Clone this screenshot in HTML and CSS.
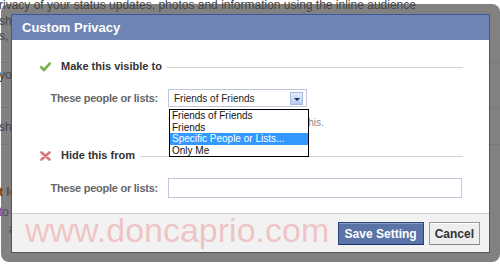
FILE: index.html
```html
<!DOCTYPE html>
<html lang="en">
<head>
    <meta charset="UTF-8">
    <title>Custom Privacy</title>
    <link rel="stylesheet" href="styles.css">
</head>
<body>
    <div class="page">
        <p class="lead">rivacy of your status updates, photos and information using the inline audience<br>share with everyone, friends of friends or friends only. This setting applies to<br>s, photos and posts you share from a phone.</p>
        <div class="page-row">you can choose who sees each item</div>
        <div class="page-row">sharing on Facebook</div>
        <div class="page-row page-row-title">t lets you share with</div>
        <div class="page-row page-link">to</div>
        <div class="page-row page-plain">a</div>
    </div>

    <div class="overlay">
        <div class="dialog">
            <div class="dialog-title">Custom Privacy</div>

            <div class="dialog-body">
                <div class="section-head">
                    <svg class="icon" width="11" height="10" viewBox="0 0 11 10">
                        <path d="M1.2 5.2 L4 8 L9.8 1.5" fill="none" stroke="#a9d38c" stroke-width="3.2" stroke-linecap="round" stroke-linejoin="round"/>
                        <path d="M1.2 5.2 L4 8 L9.8 1.5" fill="none" stroke="#6aa845" stroke-width="1.6" stroke-linecap="round" stroke-linejoin="round"/>
                    </svg>
                    <span class="section-label">Make this visible to</span>
                    <span class="rule"></span>
                </div>

                <div class="field">
                    <label class="field-label">These people or lists:</label>
                    <div class="control">
                        <div class="select">
                            <span>Friends of Friends</span>
                            <span class="select-btn"><span class="arrow"></span></span>
                        </div>
                        <div class="hint">Your friends of friends can see this.</div>
                        <ul class="dropdown">
                            <li>Friends of Friends</li>
                            <li>Friends</li>
                            <li class="active">Specific People or Lists...</li>
                            <li>Only Me</li>
                        </ul>
                    </div>
                </div>

                <div class="section-head section-hide">
                    <svg class="icon" width="11" height="10" viewBox="0 0 11 10">
                        <path d="M1.5 1.5 L9.5 8.5 M9.5 1.5 L1.5 8.5" fill="none" stroke="#eab1b1" stroke-width="3.4" stroke-linecap="round"/>
                        <path d="M1.5 1.5 L9.5 8.5 M9.5 1.5 L1.5 8.5" fill="none" stroke="#cf6565" stroke-width="1.6" stroke-linecap="round"/>
                    </svg>
                    <span class="section-label">Hide this from</span>
                    <span class="rule"></span>
                </div>

                <div class="field">
                    <label class="field-label field-label-tall">These people or lists:</label>
                    <div class="control">
                        <div class="text-input"></div>
                    </div>
                </div>
            </div>

            <div class="dialog-footer">
                <span class="watermark">www.doncaprio.com</span>
                <button class="btn btn-primary">Save Setting</button>
                <button class="btn">Cancel</button>
            </div>
        </div>
    </div>
</body>
</html>
```

FILE: styles.css
```css
body {
    margin: 0;
    width: 500px;
    height: 264px;
    overflow: hidden;
    position: relative;
    background: white;
    font-family: 'Liberation Sans', Arial, sans-serif;
}

/* page behind the dialog */
.page {
    margin-left: -1px;
    color: #444;
    font-size: 12px;
}

.lead {
    margin: -2px 0 0;
    line-height: 15.5px;
    white-space: nowrap;
}

.page-row {
    border-top: 1px solid #e5e5e5;
    line-height: 14px;
    white-space: nowrap;
}

.page-row:nth-of-type(1) {
    margin-top: 17px;
    padding: 5px 0 25px;
}

.page-row:nth-of-type(2) {
    padding: 12px 0 10px;
}

.page-row-title {
    padding-top: 40px;
    font-weight: bold;
    color: #8a4a14;
}

.page-link {
    border-top: none;
    padding-top: 6px;
    color: #7a3d9a;
}

.page-plain {
    border-top: none;
    padding-top: 3px;
    padding-left: 10px;
}

/* dialog */
.overlay {
    position: absolute;
    left: 1px;
    top: 4px;
    width: 499px;
    height: 258px;
    box-sizing: border-box;
    padding: 10px;
    background: rgba(70, 70, 70, 0.68);
    border-radius: 8px;
}

.dialog {
    background: white;
    border: 1px solid #555;
    border-top: none;
}

.dialog-title {
    height: 26px;
    box-sizing: border-box;
    padding-left: 10px;
    background: #6d84b4;
    border: 1px solid #3b5998;
    border-bottom: none;
    color: white;
    font-size: 13px;
    font-weight: bold;
    line-height: 25px;
    margin: 0 -1px;
}

.dialog-body {
    padding: 20px 26px 14px 28px;
    height: 139px;
}

.section-head {
    display: flex;
    align-items: center;
    height: 13px;
}

.section-hide {
    margin-top: 20px;
}

.icon {
    margin-right: 10px;
}

.section-label {
    font-size: 11px;
    font-weight: bold;
    color: #333;
    line-height: 13px;
}

.rule {
    flex: 1;
    margin-left: 5px;
    margin-top: 2px;
    border-top: 1px solid #d0d0d0;
}

.field {
    display: flex;
    margin-top: 16px;
}

.field-label {
    width: 118px;
    margin-right: 10px;
    text-align: right;
    font-size: 11px;
    font-weight: bold;
    color: #666;
    line-height: 18px;
    letter-spacing: -0.25px;
}

.field-label-tall {
    line-height: 20px;
}

.control {
    position: relative;
}

.select {
    width: 139px;
    height: 18px;
    box-sizing: border-box;
    border: 1px solid #bdc7d8;
    padding-left: 5px;
    display: flex;
    align-items: center;
    justify-content: space-between;
    font-size: 10px;
    color: #222;
}

.select-btn {
    width: 13px;
    height: 13px;
    box-sizing: border-box;
    margin-right: 3px;
    border: 1px solid #a7bcdc;
    background: linear-gradient(#e4ecfc, #b7cbf1);
    display: flex;
    align-items: center;
    justify-content: center;
}

.arrow {
    border-left: 3px solid transparent;
    border-right: 3px solid transparent;
    border-top: 3px solid #1b2a4a;
    margin-top: 2px;
}

.hint {
    margin-top: 10px;
    font-size: 10px;
    line-height: 12px;
    color: #888;
}

.dropdown {
    position: absolute;
    left: 1px;
    top: 20px;
    width: 138px;
    margin: 0;
    padding: 0;
    list-style: none;
    background: white;
    border: 1px solid #000;
    font-size: 10px;
    line-height: 11.5px;
    color: #111;
}

.dropdown li {
    padding-left: 2px;
    white-space: nowrap;
}

.dropdown .active {
    background: #3399ff;
    color: white;
}

.text-input {
    width: 294px;
    height: 20px;
    box-sizing: border-box;
    border: 1px solid #bdc7d8;
}

.dialog-footer {
    position: relative;
    display: flex;
    justify-content: flex-end;
    gap: 5px;
    padding: 8px 9px 7px;
    background: #f2f2f2;
    border-top: 1px solid #ccc;
}

.watermark {
    position: absolute;
    left: 13px;
    top: -1px;
    font-size: 34px;
    line-height: 34px;
    color: rgba(232, 80, 80, 0.3);
}

.btn {
    height: 23px;
    padding: 0 5px;
    border: 1px solid #999;
    border-bottom-color: #888;
    background: #eee;
    box-shadow: inset 0 1px 0 #fff;
    color: #333;
    font-family: 'Liberation Sans', Arial, sans-serif;
    font-size: 12px;
    font-weight: bold;
}

.btn-primary {
    padding: 0 6px;
    background: #5b74a8;
    border-color: #29447e #29447e #1a356e;
    box-shadow: inset 0 1px 0 #8a9cc2;
    color: white;
}
```
